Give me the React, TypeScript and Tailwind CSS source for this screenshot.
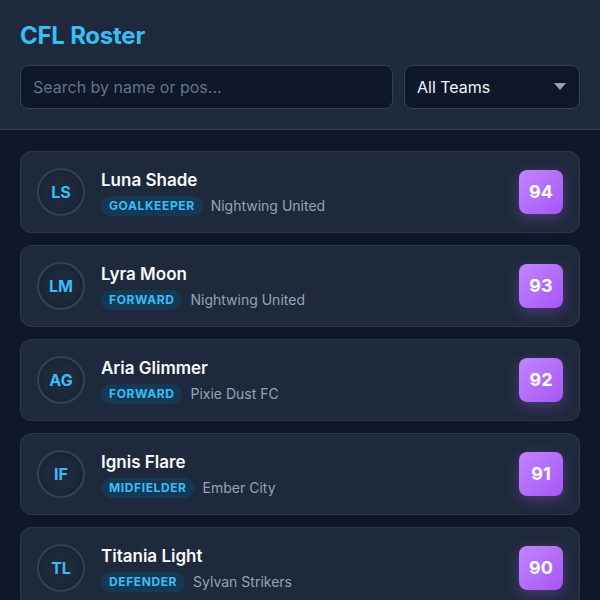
import React from "react";

const players = [
  { initials: "LS", name: "Luna Shade", pos: "Goalkeeper", team: "Nightwing United", score: 94 },
  { initials: "LM", name: "Lyra Moon", pos: "Forward", team: "Nightwing United", score: 93 },
  { initials: "AG", name: "Aria Glimmer", pos: "Forward", team: "Pixie Dust FC", score: 92 },
  { initials: "IF", name: "Ignis Flare", pos: "Midfielder", team: "Ember City", score: 91 },
  { initials: "TL", name: "Titania Light", pos: "Defender", team: "Sylvan Strikers", score: 90 },
  { initials: "OR", name: "Oberon Reed", pos: "Defender", team: "Sylvan Strikers", score: 89 },
];

export default function App() {
  return (
    <div className="h-[600px] w-[600px] overflow-hidden bg-[#0f172a] font-['Inter',sans-serif]">
      <div className="border-b border-[#334155] bg-[#1e293b] px-5 pb-5 pt-5">
        <h1 className="mb-[13px] text-2xl font-bold leading-8 tracking-[-0.01em] text-[#38bdf8]">CFL Roster</h1>
        <div className="flex gap-[11px]">
          <div className="flex h-11 flex-1 items-center rounded-lg border border-[#334155] bg-[#0f172a] px-3">
            <span className="text-base text-[#64748b]">Search by name or pos...</span>
          </div>
          <div className="flex h-11 w-[176px] items-center justify-between rounded-lg border border-[#334155] bg-[#0f172a] pl-3 pr-[13px]">
            <span className="text-base text-[#f1f5f9]">All Teams</span>
            <svg width="12" height="8" viewBox="0 0 12 8">
              <path d="M0 0 L12 0 L6 7 Z" fill="#94a3b8" />
            </svg>
          </div>
        </div>
      </div>
      <div className="flex flex-col gap-3 px-5 pt-[21px]">
        {players.map((p) => (
          <div
            key={p.name}
            className="flex items-center gap-4 rounded-xl border border-[#334155]/60 bg-[#1e293b] p-4"
          >
            <div className="flex h-12 w-12 shrink-0 items-center justify-center rounded-full border-2 border-[#334155] bg-[#1e293b] shadow-[inset_0_0_8px_rgba(0,0,0,0.25)]">
              <span className="text-base font-bold text-[#38bdf8]">{p.initials}</span>
            </div>
            <div className="flex flex-1 flex-col gap-1">
              <span className="text-[17px] font-semibold leading-6 text-[#f8fafc]">{p.name}</span>
              <div className="flex items-center gap-2">
                <span className="rounded-full bg-[#0c4a6e]/50 px-2 py-[2px] text-xs font-bold uppercase leading-4 tracking-wider text-[#38bdf8]">
                  {p.pos}
                </span>
                <span className="text-sm text-[#94a3b8]">{p.team}</span>
              </div>
            </div>
            <div className="flex h-11 w-11 items-center justify-center rounded-lg bg-gradient-to-br from-[#c084fc] to-[#a855f7] shadow-[0_4px_14px_rgba(168,85,247,0.35)]">
              <span className="text-lg font-bold text-white">{p.score}</span>
            </div>
          </div>
        ))}
      </div>
    </div>
  );
}
